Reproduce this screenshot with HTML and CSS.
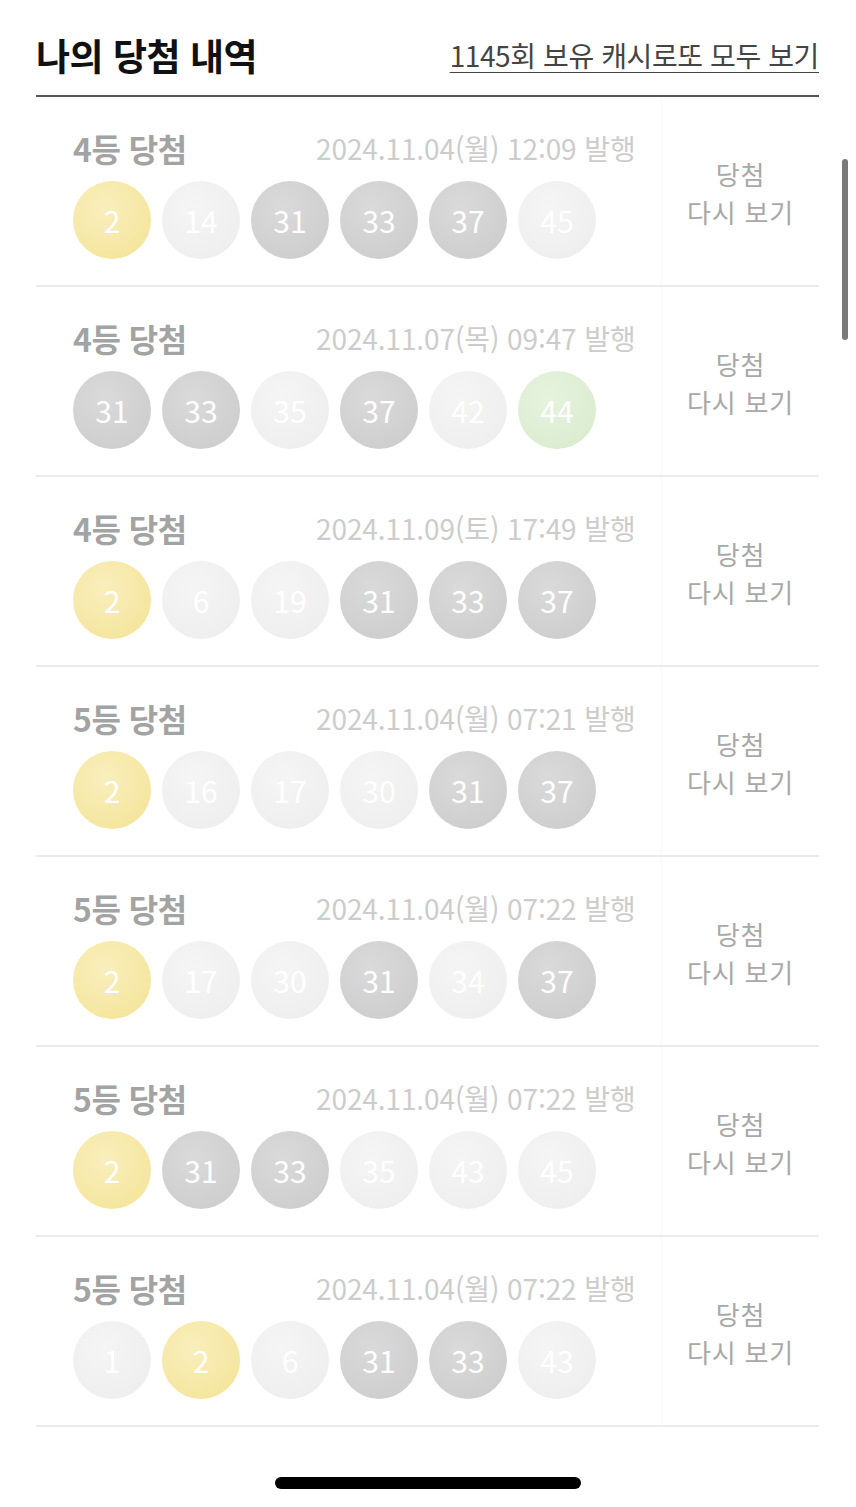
FILE: index.html
```html
<!DOCTYPE html>
<html lang="ko">
<head>
<meta charset="utf-8">
<link rel="stylesheet" href="styles.css">
</head>
<body>
<div class="page">
  <div class="header">
    <h1 class="title">나의 당첨 내역</h1>
    <a class="link">1145회 보유 캐시로또 모두 보기</a>
  </div>
  <div class="list">
    <div class="row">
      <div class="info">
        <div class="top"><span class="rank">4등 당첨</span><span class="date">2024.11.04(월) 12:09 발행</span></div>
        <div class="balls"><span class="ball y">2</span><span class="ball l">14</span><span class="ball g">31</span><span class="ball g">33</span><span class="ball g">37</span><span class="ball l">45</span></div>
      </div>
      <div class="again">당첨<br>다시 보기</div>
    </div>
    <div class="row">
      <div class="info">
        <div class="top"><span class="rank">4등 당첨</span><span class="date">2024.11.07(목) 09:47 발행</span></div>
        <div class="balls"><span class="ball g">31</span><span class="ball g">33</span><span class="ball l">35</span><span class="ball g">37</span><span class="ball l">42</span><span class="ball gr">44</span></div>
      </div>
      <div class="again">당첨<br>다시 보기</div>
    </div>
    <div class="row">
      <div class="info">
        <div class="top"><span class="rank">4등 당첨</span><span class="date">2024.11.09(토) 17:49 발행</span></div>
        <div class="balls"><span class="ball y">2</span><span class="ball l">6</span><span class="ball l">19</span><span class="ball g">31</span><span class="ball g">33</span><span class="ball g">37</span></div>
      </div>
      <div class="again">당첨<br>다시 보기</div>
    </div>
    <div class="row">
      <div class="info">
        <div class="top"><span class="rank">5등 당첨</span><span class="date">2024.11.04(월) 07:21 발행</span></div>
        <div class="balls"><span class="ball y">2</span><span class="ball l">16</span><span class="ball l">17</span><span class="ball l">30</span><span class="ball g">31</span><span class="ball g">37</span></div>
      </div>
      <div class="again">당첨<br>다시 보기</div>
    </div>
    <div class="row">
      <div class="info">
        <div class="top"><span class="rank">5등 당첨</span><span class="date">2024.11.04(월) 07:22 발행</span></div>
        <div class="balls"><span class="ball y">2</span><span class="ball l">17</span><span class="ball l">30</span><span class="ball g">31</span><span class="ball l">34</span><span class="ball g">37</span></div>
      </div>
      <div class="again">당첨<br>다시 보기</div>
    </div>
    <div class="row">
      <div class="info">
        <div class="top"><span class="rank">5등 당첨</span><span class="date">2024.11.04(월) 07:22 발행</span></div>
        <div class="balls"><span class="ball y">2</span><span class="ball g">31</span><span class="ball g">33</span><span class="ball l">35</span><span class="ball l">43</span><span class="ball l">45</span></div>
      </div>
      <div class="again">당첨<br>다시 보기</div>
    </div>
    <div class="row">
      <div class="info">
        <div class="top"><span class="rank">5등 당첨</span><span class="date">2024.11.04(월) 07:22 발행</span></div>
        <div class="balls"><span class="ball l">1</span><span class="ball y">2</span><span class="ball l">6</span><span class="ball g">31</span><span class="ball g">33</span><span class="ball l">43</span></div>
      </div>
      <div class="again">당첨<br>다시 보기</div>
    </div>
  </div>
</div>
<div class="scrollbar"></div>
<div class="home"></div>
</body>
</html>
```

FILE: styles.css
```css
html, body {
  margin: 0;
  padding: 0;
  background: #ffffff;
}
body {
  font-family: "Noto Sans CJK KR", "Noto Sans", sans-serif;
  width: 856px;
  height: 1507px;
  overflow: hidden;
  position: relative;
}
.page {
  padding: 0 37px 0 36px;
}
.header {
  display: flex;
  justify-content: space-between;
  align-items: center;
  height: 97px;
  padding-top: 14px;
  box-sizing: border-box;
  border-bottom: 2px solid #555555;
}
.title {
  margin: 0;
  font-size: 37px;
  font-weight: 700;
  color: #111111;
  letter-spacing: -0.5px;
}
.link {
  font-size: 28px;
  color: #444444;
  text-decoration: underline;
  text-decoration-thickness: 1px;
  text-underline-offset: 5px;
  letter-spacing: -0.4px;
}
.row {
  display: flex;
  height: 190px;
  box-sizing: border-box;
  border-bottom: 2px solid #ebebeb;
}
.info {
  width: 626px;
  padding-left: 37px;
  padding-top: 31px;
  box-sizing: border-box;
  border-right: 1px solid #fafafa;
}
.top {
  display: flex;
  align-items: center;
  height: 40px;
}
.rank {
  width: 243px;
  font-size: 32px;
  font-weight: 700;
  color: #a3a3a3;
  letter-spacing: -0.5px;
}
.date {
  font-size: 28px;
  color: #cccccc;
  letter-spacing: -0.1px;
}
.balls {
  display: flex;
  gap: 11px;
  margin-top: 13px;
}
.ball {
  width: 78px;
  height: 78px;
  border-radius: 50%;
  display: flex;
  align-items: center;
  justify-content: center;
  font-size: 30px;
  color: #ffffff;
}
.ball.y {
  background: radial-gradient(circle at 40% 35%, #f9efbd 0%, #f5e6a0 70%, #f3e294 100%);
}
.ball.g {
  background: radial-gradient(circle at 40% 35%, #dadada 0%, #cfcfcf 70%, #c9c9c9 100%);
}
.ball.l {
  background: radial-gradient(circle at 40% 35%, #f5f5f5 0%, #efefef 70%, #ebebeb 100%);
}
.ball.gr {
  background: radial-gradient(circle at 40% 35%, #e6f3de 0%, #dcedd2 70%, #d6e9cb 100%);
}
.again {
  flex: 1;
  display: flex;
  align-items: center;
  justify-content: center;
  text-align: center;
  font-size: 26px;
  line-height: 38px;
  color: #a8a8a8;
  padding-top: 4px;
  letter-spacing: 0.8px;
}
.scrollbar {
  position: absolute;
  left: 842px;
  top: 159px;
  width: 6px;
  height: 181px;
  border-radius: 3px;
  background: #7a7a7a;
}
.home {
  position: absolute;
  left: 275px;
  top: 1477px;
  width: 306px;
  height: 12px;
  border-radius: 6px;
  background: #000000;
}
```
